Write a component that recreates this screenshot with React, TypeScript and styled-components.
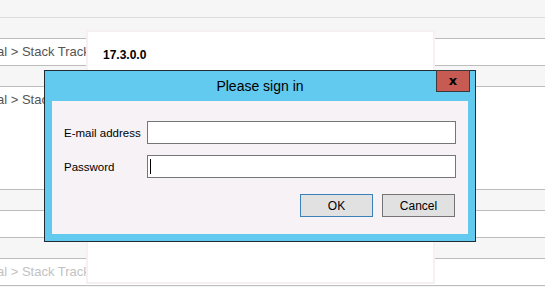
import React from "react";
import styled, { createGlobalStyle } from "styled-components";

const Global = createGlobalStyle`
  html, body { margin: 0; padding: 0; background: #f6f6f6; }
  * { box-sizing: border-box; }
`;

const Page = styled.div`
  position: relative;
  width: 545px;
  height: 287px;
  overflow: hidden;
  background: #f6f6f6;
  font-family: "Liberation Sans", Arial, sans-serif;
`;

const Rows = styled.div`
  display: flex;
  flex-direction: column;
`;

const HeaderBar = styled.div`
  height: 18px;
  background: #f6f6f6;
  border-bottom: 1px solid #dcdcdc;
`;

const Row = styled.div<{ $white?: boolean; $h: number; $faded?: boolean }>`
  height: ${(p) => p.$h + 1}px;
  background: ${(p) => (p.$white ? "#ffffff" : "#f6f6f6")};
  border-bottom: 1px solid #bdbdbd;
  font-size: 13px;
  line-height: 26px;
  color: ${(p) => (p.$faded ? "#c2c2c2" : "#555555")};
  white-space: nowrap;
  overflow: hidden;
  text-indent: -3px;
`;

const Panel = styled.div`
  position: absolute;
  left: 86px;
  top: 30px;
  width: 349px;
  height: 254px;
  background: #ffffff;
  border: 2px solid #f7f0f2;
  padding: 17px 0 0 15px;
`;

const Version = styled.div`
  font-weight: bold;
  font-size: 12px;
  line-height: 12px;
  color: #000;
`;

const Dialog = styled.div`
  position: absolute;
  left: 44px;
  top: 70px;
  width: 432px;
  height: 172px;
  background: #63caef;
  border: 1px solid #1f2c33;
  padding: 0 7px 7px;
  display: flex;
  flex-direction: column;
`;

const TitleBar = styled.div`
  height: 30px;
  display: flex;
  align-items: center;
  justify-content: center;
  font-size: 14px;
  color: #000;
  padding-bottom: 0px;
`;

const CloseButton = styled.div`
  position: absolute;
  top: -1px;
  right: 5px;
  width: 34px;
  height: 22px;
  background: #c75b53;
  border: 1px solid #3a3a3a;
  display: flex;
  align-items: center;
  justify-content: center;
  font-family: "DejaVu Sans", sans-serif;
  font-weight: bold;
  font-size: 13px;
  line-height: 13px;
  color: #000;
  padding-bottom: 2px;
`;

const Content = styled.div`
  flex: 1;
  background: #f6f2f6;
  padding: 20px 12px 0 12px;
  display: flex;
  flex-direction: column;
`;

const FieldRow = styled.div<{ $mb: number }>`
  display: flex;
  align-items: center;
  margin-bottom: ${(p) => p.$mb}px;
`;

const Label = styled.label`
  width: 83px;
  font-size: 11.5px;
  color: #000;
`;

const InputWrap = styled.div`
  position: relative;
  flex: 1;
  display: flex;
`;

const Input = styled.input`
  flex: 1;
  height: 23px;
  border: 1px solid #767676;
  background: #fff;
  outline: none;
  padding: 0 3px;
  font-family: inherit;
  font-size: 12px;
  caret-color: transparent;
`;

const Caret = styled.span`
  position: absolute;
  left: 3px;
  top: 4px;
  width: 1px;
  height: 15px;
  background: #000;
`;

const ButtonRow = styled.div`
  display: flex;
  justify-content: flex-end;
  gap: 9px;
  padding-right: 1px;
`;

const Button = styled.button<{ $primary?: boolean }>`
  width: 73px;
  height: 23px;
  background: #e1e1e1;
  border: 1px solid ${(p) => (p.$primary ? "#3c80b8" : "#747474")};
  font-family: "Liberation Sans", Arial, sans-serif;
  font-size: 12px;
  color: #000;
  padding: 0;
`;

const crumb = "al > Stack Tracking";

export default function App() {
  return (
    <Page>
      <Global />
      <Rows>
        <HeaderBar />
        <Row $h={20} />
        <Row $white $h={26}>{crumb}</Row>
        <Row $h={20} />
        <Row $white $h={102}>{crumb}</Row>
        <Row $h={20} />
        <Row $white $h={26} />
        <Row $h={20} />
        <Row $white $h={26} $faded>{crumb}</Row>
      </Rows>
      <Panel>
        <Version>17.3.0.0</Version>
      </Panel>
      <Dialog>
        <TitleBar>Please sign in</TitleBar>
        <CloseButton>x</CloseButton>
        <Content>
          <FieldRow $mb={11}>
            <Label>E-mail address</Label>
            <InputWrap>
              <Input type="text" readOnly />
            </InputWrap>
          </FieldRow>
          <FieldRow $mb={16}>
            <Label>Password</Label>
            <InputWrap>
              <Input type="password" readOnly />
              <Caret />
            </InputWrap>
          </FieldRow>
          <ButtonRow>
            <Button $primary>OK</Button>
            <Button>Cancel</Button>
          </ButtonRow>
        </Content>
      </Dialog>
    </Page>
  );
}
